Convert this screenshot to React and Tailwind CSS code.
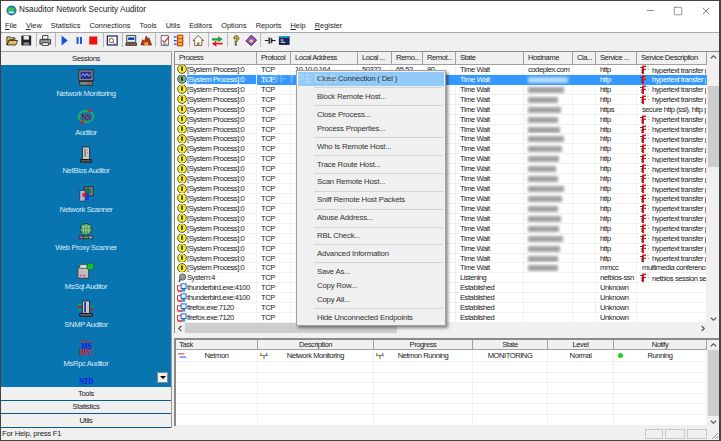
import { Minus, Square, X } from "lucide-react";

const font = "font-['Liberation_Sans',Arial,sans-serif]";

const cols = [
  { name: "Process", w: "w-[82px]" },
  { name: "Protocol", w: "w-[34px]" },
  { name: "Local Address", w: "w-[67px]" },
  { name: "Local ...", w: "w-[34px]" },
  { name: "Remo...", w: "w-[31px]" },
  { name: "Remot...", w: "w-[33px]" },
  { name: "State", w: "w-[68px]" },
  { name: "Hostname", w: "w-[49px]" },
  { name: "Cla...", w: "w-[23px]" },
  { name: "Service ...", w: "w-[41px]" },
  { name: "Service Description", w: "w-[70px]" },
];

const lowerCols = [
  { name: "Task", w: "w-[82px]", left: true },
  { name: "Description", w: "w-[116px]" },
  { name: "Progress", w: "w-[99px]" },
  { name: "State", w: "w-[75px]" },
  { name: "Level", w: "w-[66px]" },
  { name: "Notify", w: "w-[93px]" },
];

const hostBars = [
  "", "w-[40px]", "w-[36px]", "w-[30px]", "w-[33px]", "w-[30px]", "w-[32px]", "w-[36px]", "w-[34px]", "w-[31px]",
  "w-[28px]", "w-[30px]", "w-[36px]", "w-[34px]", "w-[30px]", "w-[33px]", "w-[31px]", "w-[35px]", "w-[32px]", "w-[30px]", "w-[30px]",
];

const sysRows = hostBars.map((bar, i) => ({
  kind: "sys",
  name: "[System Process]:0",
  state: "Time Wait",
  host: i === 0 ? "codeplex.com" : "",
  bar,
  service: i === 4 ? "https" : i === 20 ? "mmcc" : "http",
  desc: i === 4 ? "secure http (ssl), http p" : i === 20 ? "multimedia conference" : "hypertext transfer p",
  icon: i !== 4 && i !== 20,
  selected: i === 1,
}));

const rows = [
  ...sysRows,
  { kind: "cog", name: "System:4", state: "Listening", service: "netbios-ssn", desc: "netbios session ser", icon: true },
  { kind: "net", name: "thunderbird.exe:4100", state: "Established", service: "Unknown", desc: "" },
  { kind: "net", name: "thunderbird.exe:4100", state: "Established", service: "Unknown", desc: "" },
  { kind: "net", name: "firefox.exe:7120", state: "Established", service: "Unknown", desc: "" },
  { kind: "net", name: "firefox.exe:7120", state: "Established", service: "Unknown", desc: "" },
];

const menuGroups = [
  ["Close Connection ( Del )"],
  ["Block Remote Host..."],
  ["Close Process...", "Process Properties..."],
  ["Who Is Remote Host..."],
  ["Trace Route Host..."],
  ["Scan Remote Host..."],
  ["Sniff Remote Host Packets"],
  ["Abuse Address..."],
  ["RBL Check..."],
  ["Advanced Information"],
  ["Save As...", "Copy Row...", "Copy All..."],
  ["Hide Unconnected Endpoints"],
];

const RowIcon = ({ kind, selected }) => {
  if (kind === "sys") {
    return (
      <svg viewBox="0 0 10 10" className="w-[10px] h-[10px] shrink-0">
        <circle cx="5" cy="5" r="4.4" fill={selected ? "#7fb08a" : "#f7ef1e"} stroke="#333" strokeWidth="0.8" />
        <path d="M4.2 2.4h1.6v3.8H5.6v.8H4.4v-.8h-.2z" fill="#222" />
      </svg>
    );
  }
  if (kind === "cog") {
    return (
      <svg viewBox="0 0 10 10" className="w-[10px] h-[10px] shrink-0">
        <circle cx="5.6" cy="4" r="3.2" fill="#9a9a9a" stroke="#555" strokeWidth="0.8" />
        <path d="M3.6 6 2 9" stroke="#555" strokeWidth="1.6" />
      </svg>
    );
  }
  return (
    <svg viewBox="0 0 11 10" className="w-[10px] h-[10px] shrink-0">
      <rect x="0.5" y="2.5" width="6" height="5" fill="#fff" stroke="#e02020" />
      <rect x="4.5" y="0.5" width="5.5" height="5" fill="#dff" stroke="#2050d0" />
      <path d="M1 9h5" stroke="#e02020" />
      <rect x="6" y="6" width="3" height="3" fill="#20a0c0" />
    </svg>
  );
};

const ServiceIcon = () => (
  <svg viewBox="0 0 11 10" className="w-[11px] h-[10px] shrink-0">
    <path d="M3 .5h4v1.6H5v1.6h2v1.4H5V9.6H3z" fill="#e01818" />
    <path d="M1.2 2.5h2.5M1.8 5h2.2M2 7.2h1.5" stroke="#222" strokeWidth="0.9" />
    <path d="M8.5 1.5h1M9 4.4h1" stroke="#888" strokeWidth="0.8" />
  </svg>
);

const Tool = ({ children }) => (
  <svg viewBox="0 0 14 14" className="w-[12.5px] h-[13px] mx-px shrink-0">{children}</svg>
);

const Sep = () => <span className="w-px h-[14px] bg-[#b8b8b8] mx-[1.75px] shrink-0" />;

const Toolbar = () => (
  <div className="h-[17px] shrink-0 flex items-center pl-[3.75px] pb-[2px] bg-[#f0f0f0] border-t border-[#a8a8a8]">
    <Tool><path d="M1 12V3h4l1 1h4v2H4l-3 6 2-5h10l-2 5z" fill="#e8c050" stroke="#333" strokeWidth="1" /></Tool>
    <Tool><path d="M1.5 1.5h11v11h-11z" fill="#222" /><path d="M4 2h6v4H4z" fill="#eee" /><path d="M4 9h6v3H4z" fill="#888" /></Tool>
    <Sep />
    <Tool><path d="M4 1.5h6v4H4z" fill="#fff" stroke="#333" /><path d="M1 6h12v5H1z" fill="#999" stroke="#333" /><path d="M3.5 9.5h7v3h-7z" fill="#fff" stroke="#333" /></Tool>
    <Sep />
    <Tool><path d="M4 1.5 11 7l-7 5.5z" fill="#1656d8" /></Tool>
    <Tool><path d="M4 3h2.2v8H4zM7.8 3H10v8H7.8z" fill="#1656d8" /></Tool>
    <Tool><path d="M2.5 2.5h9v9h-9z" fill="#f01010" /></Tool>
    <Sep />
    <Tool><rect x="1.5" y="2" width="11" height="10" fill="#fff" stroke="#1a2a70" strokeWidth="1.4" /><circle cx="6" cy="7" r="2.4" fill="none" stroke="#7a3a10" /><path d="m8 9 3 3" stroke="#7a3a10" /></Tool>
    <Sep />
    <Tool><rect x="2" y="1.5" width="10" height="7.5" fill="#dfe" stroke="#333" /><path d="M3.5 3.5h7v3h-7z" fill="#2040b0" /><path d="M1 10h12v2.5H1z" fill="#c05050" stroke="#333" /></Tool>
    <Tool><path d="M1 12 3 6l2 2 2-6 2 4 1-2 3 8z" fill="#c03018" stroke="#502010" strokeWidth="0.7" /><path d="M5 9h4v3H5z" fill="#f0b030" /></Tool>
    <Sep />
    <Tool><path d="M2.5 1.5h8v11h-8z" fill="#fff" stroke="#555" /><path d="m4 7 2 2 5-6" stroke="#c03030" fill="none" strokeWidth="1.3" /><path d="M4 11h5" stroke="#3060c0" /></Tool>
    <Tool><path d="M1 3h3M1 7h3M1 11h3" stroke="#2040e0" strokeWidth="1.4" /><path d="M5 1h6v12H5z" fill="#f0c020" stroke="#b02020" /><path d="M5 5h6M5 9h6" stroke="#d02020" /></Tool>
    <Sep />
    <Tool><path d="M7 1.5 1 7h2v5.5h8V7h2z" fill="#fff" stroke="#6a5020" /><path d="M5.8 9h2.4v3.5H5.8z" fill="#a06a20" /></Tool>
    <Sep />
    <Tool><path d="M1 4.5h7V2l5 3.5-5 3.5V7H1z" fill="#20a040" /><path d="M13 9.5H6V7L1 10.5 6 14v-2.500h7z" fill="#e02020" /></Tool>
    <Sep />
    <Tool><path d="M4 4.500a3 3 0 1 1 4.500 2.600C7.500 7.700 7.500 8.300 7.500 9.500h-2c0-1.800.5-2.500 1.500-3.200.6-.4.6-1.800-.4-1.800-.6 0-.9.300-.9 1z" fill="#d0a818" stroke="#222" strokeWidth="0.6" /><path d="M5.500 10.500h2v2h-2z" fill="#222" /></Tool>
    <Tool><path d="M7 1 13 6.500 7 13 1 7.500z" fill="#9050c0" stroke="#3a2060" /><path d="M5 6h4v3H5z" fill="#f0d060" /></Tool>
    <Sep />
    <Tool><path d="M1 7h4M9 7h4" stroke="#222" strokeWidth="1.2" /><path d="M5 3.500h1.600v7H5zM7.500 3.500 9.500 5v4l-2 1.500z" fill="#222" /></Tool>
    <Tool><rect x="1" y="2" width="12" height="10" fill="#152a50" /><path d="M1 2h12v2H1z" fill="#20a0d0" /><path d="M3 6h3v1H3zM3 8.500h5v1H3z" fill="#fff" /></Tool>
  </div>
);

const sessions = [
  {
    label: "Network Monitoring",
    icon: (
      <>
        <rect x="2" y="1" width="16" height="12" fill="#888" stroke="#222" />
        <rect x="4" y="3" width="12" height="8" fill="#1c2c9c" />
        <path d="m5 8 2-3 2 3 2-3 2 3 2-3" stroke="#dde" fill="none" strokeWidth="0.8" />
        <rect x="3" y="14" width="14" height="4" fill="#888" stroke="#222" />
        <path d="M5 16h2" stroke="#30d030" />
        <path d="M12 16h3" stroke="#d03030" />
      </>
    ),
  },
  {
    label: "Auditor",
    icon: (
      <>
        <ellipse cx="10" cy="9.500" rx="8.500" ry="6.500" fill="#1a7ab0" stroke="#22d030" strokeWidth="1.200" />
        <path d="m13 0 4 3.500-4 1zM7 18.500 2.500 15l4.500-1z" fill="#f01010" />
        <text x="10" y="13" textAnchor="middle" fontSize="9" fontWeight="700" fontFamily="Liberation Serif" fill="#7a1228">NS</text>
      </>
    ),
  },
  {
    label: "NetBios Auditor",
    icon: (
      <>
        <path d="M6 1h8v14H6z" fill="#c8c8c8" stroke="#222" />
        <path d="M8 3h2v9H8z" fill="#888" />
        <path d="M11.500 4v1M11.500 7v1" stroke="#e03030" />
        <path d="M4 15h12v3H4z" fill="#555" stroke="#111" />
      </>
    ),
  },
  {
    label: "Network Scanner",
    icon: (
      <>
        <path d="M8 2h10v10H8z" fill="#889" stroke="#222" />
        <circle cx="12" cy="7" r="4" fill="#207040" />
        <path d="M3 6h6v12H3z" fill="#a8b8d8" stroke="#336" />
        <path d="M10 9h3v8h-3z" fill="#1838e0" />
        <path d="M6 9h4v4H6z" fill="#e02020" />
      </>
    ),
  },
  {
    label: "Web Proxy Scanner",
    icon: (
      <>
        <circle cx="10" cy="7" r="6.500" fill="#3f9a5c" stroke="#20303a" />
        <path d="M5 4h10M4 8h12M10 1v12M6 2c2 3 2 8 0 10M14 2c-2 3-2 8 0 10" stroke="#b8e0b0" strokeWidth="0.700" fill="none" />
        <path d="M2 14h16v4H2z" fill="#333" />
        <path d="M3 15h4v2H3z" fill="#e040a0" />
        <path d="M8 15h4v2H8z" fill="#30d030" />
        <path d="M13 15h4v2h-4z" fill="#a0a0f0" />
      </>
    ),
  },
  {
    label: "MsSql Auditor",
    icon: (
      <>
        <path d="M1 6h12v12H1z" fill="#c0c0c0" stroke="#333" />
        <path d="M3 3h11v4H3z" fill="#e0e0e0" stroke="#555" />
        <path d="M3 15h2M7 15h2" stroke="#e040a0" strokeWidth="2" />
        <circle cx="15" cy="5" r="4" fill="#10c030" stroke="#064" />
      </>
    ),
  },
  {
    label: "SNMP Auditor",
    icon: (
      <>
        <path d="M6 1h8v14H6z" fill="#c8c8c8" stroke="#222" />
        <path d="M9 2v12" stroke="#1838c0" strokeWidth="2" />
        <path d="M1 5h4M1 11h4M15 7h4" stroke="#10b030" strokeWidth="1.500" />
        <path d="M1 8h4M15 11h4" stroke="#e01010" strokeWidth="1.500" />
        <path d="M3 15h14v3H3z" fill="#666" stroke="#111" />
      </>
    ),
  },
  {
    label: "MsRpc Auditor",
    icon: (
      <>
        <path d="M3 3h2M7 3h2M11 3h2M15 3h2" stroke="#e02020" strokeWidth="2" />
        <text x="10" y="11" textAnchor="middle" fontSize="8" fontWeight="700" fontFamily="Liberation Serif" fill="#1010f0">MS</text>
        <text x="10" y="18" textAnchor="middle" fontSize="8" fontWeight="700" fontFamily="Liberation Serif" fill="#f01010">RPC</text>
      </>
    ),
  },
  {
    label: "",
    icon: <text x="10" y="8" textAnchor="middle" fontSize="8" fontWeight="700" fontFamily="Liberation Serif" fill="#1010f0">NTD</text>,
  },
];

const Sidebar = () => (
  <div className="w-[171px] shrink-0 flex flex-col border-r border-[#9a9a9a] text-[7.600px] tracking-[-0.35px] text-[#222]">
    <div className="h-[14px] shrink-0 bg-[#f0f0f0] flex items-center justify-center border-t border-[#a0a0a0]">Sessions</div>
    <div className="relative h-[322px] shrink-0 bg-[#0975b0] overflow-hidden pt-[4px] flex flex-col items-center">
      {sessions.map((s) => (
        <div key={s.label} className="h-[38.500px] shrink-0 flex flex-col items-center text-[#dcecf6] leading-[11px]">
          <svg viewBox="0 0 20 20" className="w-[18px] h-[18px] mb-px shrink-0">{s.icon}</svg>
          <span className="whitespace-nowrap">{s.label}</span>
        </div>
      ))}
      <button className="absolute left-[156px] top-[307px] w-[11px] h-[11px] bg-[#f0f0f0] border border-[#888] flex items-center justify-center">
        <span className="w-0 h-0 border-x-[3px] border-x-transparent border-t-[3px] border-t-black" />
      </button>
    </div>
    {["Tools", "Statistics", "Utils"].map((t) => (
      <div key={t} className="h-[13.500px] shrink-0 bg-[#f0f0f0] flex items-center justify-center border-b border-[#0a5a8c]">{t}</div>
    ))}
  </div>
);

const Arrow = ({ dir }) => {
  const d = { up: "m2 6 3-3 3 3", down: "m2 4 3 3 3-3", left: "m6 2-3 3 3 3", right: "m4 2 3 3-3 3" }[dir];
  return (
    <svg viewBox="0 0 10 10" className="w-[9px] h-[9px]">
      <path d={d} fill="none" stroke="#444" strokeWidth="1.200" />
    </svg>
  );
};

const Cell = ({ w, selected, pad, iconCell, icon, children }) => {
  if (iconCell) {
    return (
      <div className={`${w} shrink-0 flex items-center pl-[2px] border-r border-b border-[#f0f0f0] overflow-hidden whitespace-nowrap`}>
        {icon}
        <span className={`${selected ? "bg-[#3399ff] text-white" : ""} flex-1 h-full`}>{children}</span>
      </div>
    );
  }
  return (
    <div className={`${w} shrink-0 ${pad ? "pl-[4px]" : ""} border-r border-b ${selected ? "bg-[#3399ff] text-white border-[#3399ff]" : "border-[#f0f0f0]"} overflow-hidden whitespace-nowrap`}>
      {children}
    </div>
  );
};

const Grid = () => (
  <div className="w-[532px] shrink-0 text-[7.600px] tracking-[-0.45px] text-[#222]">
    <div className="flex h-[13px] bg-[#f0f0f0] border-b border-[#a0a0a0]">
      {cols.map((c) => (
        <div key={c.name} className={`${c.w} shrink-0 pl-[4px] border-r border-[#a0a0a0] leading-[12px] whitespace-nowrap overflow-hidden`}>{c.name}</div>
      ))}
    </div>
    {rows.map((r, i) => (
      <div key={i} className="flex h-[9.930px] leading-[9px] bg-white">
        <Cell w={cols[0].w} selected={r.selected} iconCell icon={<RowIcon kind={r.kind} selected={r.selected} />}>{r.name}</Cell>
        <Cell w={cols[1].w} selected={r.selected} pad>TCP</Cell>
        <Cell w={cols[2].w} selected={r.selected} pad>{i === 0 ? "10.10.0.164" : ""}</Cell>
        <Cell w={cols[3].w} selected={r.selected} pad>{i === 0 ? "50322" : ""}</Cell>
        <Cell w={cols[4].w} selected={r.selected} pad>{i === 0 ? "65.52" : ""}</Cell>
        <Cell w={cols[5].w} selected={r.selected} pad>{i === 0 ? "80" : ""}</Cell>
        <Cell w={cols[6].w} selected={r.selected} pad>{r.state}</Cell>
        <Cell w={cols[7].w} selected={r.selected} pad>
          {r.host}
          {r.bar && <span className={`${r.bar} inline-block h-[6px] align-middle blur-[1.500px] ${r.selected ? "bg-[#bcdcff]" : "bg-[#a0a0a0]"}`} />}
        </Cell>
        <Cell w={cols[8].w} selected={r.selected} pad />
        <Cell w={cols[9].w} selected={r.selected} pad>{r.service}</Cell>
        <Cell w={cols[10].w} selected={r.selected}>
          <span className={`flex items-center ${r.icon ? "pl-[2px]" : "pl-[5px]"}`}>
            {r.icon && <span className="mr-[2px] flex"><ServiceIcon /></span>}
            {r.desc}
          </span>
        </Cell>
      </div>
    ))}
  </div>
);

const MiniFlow = () => (
  <svg viewBox="0 0 9 9" className="w-[8px] h-[8px]">
    <path d="M1 1v3M4.500 3v5" stroke="#e02020" />
    <path d="M7.500 1v3" stroke="#2040e0" />
    <path d="M0 4h9" stroke="#20a040" />
  </svg>
);

const LowerCell = ({ w, icon, children }) => (
  <div className={`${w} shrink-0 relative border-r border-[#f0f0f0] text-center whitespace-nowrap`}>
    {icon && <span className="absolute left-[2px] top-[2px]">{icon}</span>}
    {children}
  </div>
);

const Scroll = ({ thumb }) => (
  <div className="w-[12px] shrink-0 bg-[#f0f0f0] flex flex-col items-center pl-px">
    <div className="h-[10px] flex items-center"><Arrow dir="up" /></div>
    <div className="flex-1 w-full">
      <div className={`${thumb} w-full bg-[#cdcdcd]`} />
    </div>
    <div className="h-[10px] flex items-center"><Arrow dir="down" /></div>
  </div>
);

const LowerGrid = () => (
  <div className="flex h-[88px] shrink-0 border-t-2 border-l-2 border-[#8a8a8a]">
    <div className="w-[531px] shrink-0 text-[7.600px] tracking-[-0.45px] text-[#222] bg-white">
      <div className="flex h-[10px] bg-[#f0f0f0] border-b border-[#a0a0a0]">
        {lowerCols.map((c) => (
          <div key={c.name} className={`${c.w} shrink-0 border-r border-[#a0a0a0] leading-[9px] ${c.left ? "pl-[3px]" : "text-center"}`}>{c.name}</div>
        ))}
      </div>
      <div className="flex h-[12px] border-b border-[#f0f0f0] leading-[11px]">
        <LowerCell w="w-[82px]" icon={<svg viewBox="0 0 10 8" className="w-[8px] h-[7px]"><path d="M0 2h8" stroke="#e02020" strokeWidth="1.200" /><path d="M2 6h8" stroke="#2040e0" strokeWidth="1.200" /></svg>}>Netmon</LowerCell>
        <LowerCell w="w-[116px]" icon={<MiniFlow />}>Network Monitoring</LowerCell>
        <LowerCell w="w-[99px]" icon={<MiniFlow />}>Netmon Running</LowerCell>
        <LowerCell w="w-[75px]">MONITORING</LowerCell>
        <LowerCell w="w-[66px]">Normal</LowerCell>
        <LowerCell w="w-[93px]" icon={<span className="block w-[5px] h-[5px] ml-[2px] mt-px rounded-full bg-[#20d020]" />}>Running</LowerCell>
      </div>
      {[0, 1, 2, 3, 4, 5].map((n) => (
        <div key={n} className="flex h-[10.600px] border-b border-[#f0f0f0]">
          {lowerCols.map((c) => (
            <div key={c.name} className={`${c.w} shrink-0 border-r border-[#f0f0f0]`} />
          ))}
        </div>
      ))}
    </div>
    <Scroll thumb="h-[66px]" />
  </div>
);

const ContextMenu = () => (
  <div className="absolute left-[121px] top-[18px] w-[150px] h-[256px] bg-[#f0f0f0] border border-[#a0a0a0] shadow-[2px_2px_3px_rgba(0,0,0,0.45)] p-px text-[7.800px] tracking-[-0.2px] text-[#333] z-10">
    {menuGroups.map((group, g) => (
      <div key={g}>
        {g > 0 && (
          <div className="h-[4px] flex items-center pl-[16px] pr-px">
            <div className="h-px w-full bg-[#d4d4d4]" />
          </div>
        )}
        {group.map((item, i) => (
          <div key={item} className={`h-[13.900px] flex items-center pl-[19px] whitespace-nowrap ${g === 0 && i === 0 ? "bg-[#91c9f7]" : ""}`}>{item}</div>
        ))}
      </div>
    ))}
  </div>
);

export default function App() {
  return (
    <div className={`${font} w-[721px] h-[441px] flex flex-col bg-[#f0f0f0] border-t border-l border-r-2 border-b border-[#444] overflow-hidden text-[#222]`}>
      <div className="h-[19px] bg-white flex items-center shrink-0">
        <svg viewBox="0 0 12 12" className="w-[11px] h-[11px] ml-[5px] mr-[2px]">
          <circle cx="6" cy="6" r="5.500" fill="#207a9a" />
          <path d="M2 4c3-3 6-1 8 0-1 3-6 4-8 3z" fill="#30c060" />
          <path d="M3 7h6v2H3z" fill="#d8e8e8" />
        </svg>
        <span className="text-[8.200px]">Nsauditor Network Security Auditor</span>
        <div className="ml-auto flex items-center mr-[7px] gap-[17px] text-[#333]">
          <Minus size={11} strokeWidth={1.200} />
          <Square size={10} strokeWidth={1.200} />
          <X size={12} strokeWidth={1.200} />
        </div>
      </div>
      <div className="h-[12px] bg-white flex items-center gap-[9px] pl-[4px] text-[7.400px] shrink-0">
        <span><u>F</u>ile</span>
        <span><u>V</u>iew</span>
        <span>Statistics</span>
        <span>Connections</span>
        <span>Tools</span>
        <span>Utils</span>
        <span>Editors</span>
        <span>Options</span>
        <span>Reports</span>
        <span><u>H</u>elp</span>
        <span><u>R</u>egister</span>
      </div>
      <Toolbar />
      <div className="h-[2px] shrink-0" />
      <div className="flex h-[377px] shrink-0">
        <Sidebar />
        <div className="flex-1 min-w-0 flex flex-col pl-[2px]">
          <div className="relative h-[282px] flex flex-col border-t border-l border-[#8a8a8a] shrink-0">
            <div className="flex h-[271px] shrink-0 overflow-hidden">
              <Grid />
              <Scroll thumb="h-[81px] mt-[24px]" />
            </div>
            <div className="h-[10px] flex items-center bg-[#f0f0f0]">
              <div className="w-[10px] flex justify-center"><Arrow dir="left" /></div>
              <div className="w-[212px] h-full bg-[#cdcdcd]" />
              <div className="ml-auto mr-[12px]"><Arrow dir="right" /></div>
            </div>
            <ContextMenu />
            <span className="absolute left-[85px] top-[21px] text-[12px] leading-[12px] font-bold tracking-[1px] text-white/25 z-20">SOFTPEDIA</span>
          </div>
          <div className="h-[5px] shrink-0" />
          <LowerGrid />
        </div>
      </div>
      <div className="h-[12px] shrink-0 flex items-center pl-px text-[7.600px] tracking-[-0.2px]">
        <span>For Help, press F1</span>
        <div className="ml-auto flex gap-[2px]">
          <span className="w-[18px] h-[10px] border border-[#c8c8c8]" />
          <span className="w-[20px] h-[10px] border border-[#c8c8c8]" />
          <span className="w-[20px] h-[10px] border border-[#c8c8c8]" />
        </div>
        <svg viewBox="0 0 8 8" className="w-[8px] h-[8px] ml-[4px] self-end">
          <path d="M7 1 1 7M7 4 4 7M7 6.500 6.500 7" stroke="#999" />
        </svg>
      </div>
    </div>
  );
}
